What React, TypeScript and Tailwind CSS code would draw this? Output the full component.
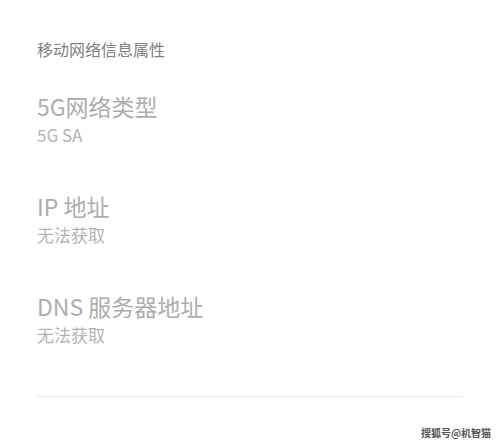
import React from "react";

const font = { fontFamily: '"Noto Sans CJK SC", "Noto Sans", sans-serif' };

function Item({ title, value }: { title: string; value: string }) {
  return (
    <div className="flex flex-col">
      <div className="text-[23px] leading-[30px] text-[#adadad]">{title}</div>
      <div className="text-[17px] leading-[22px] text-[#b3b3b3] mt-[3px]">{value}</div>
    </div>
  );
}

export default function App() {
  return (
    <div className="w-[500px] h-[443px] bg-white flex flex-col overflow-hidden" style={font}>
      <div className="px-[37px] pt-[38px]">
        <div className="text-[16px] leading-[22px] text-[#808080]">移动网络信息属性</div>
        <div className="flex flex-col gap-[45px] mt-[31px]">
          <Item title="5G网络类型" value="5G SA" />
          <Item title="IP 地址" value="无法获取" />
          <Item title="DNS 服务器地址" value="无法获取" />
        </div>
        <div className="h-px bg-[#ebebeb] mt-[50px]" />
      </div>
      <div className="flex justify-end pr-[9px] mt-[29px]">
        <div className="text-[10px] leading-[14px] font-bold text-[#555]">搜狐号@机智猫</div>
      </div>
    </div>
  );
}
